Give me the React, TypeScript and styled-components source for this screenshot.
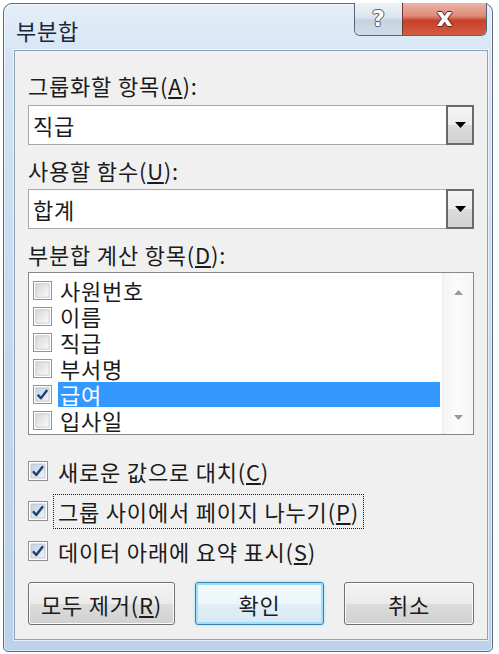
import React from 'react'
import styled, { createGlobalStyle, css } from 'styled-components'

const GlobalStyle = createGlobalStyle`
  html, body {
    margin: 0;
    padding: 0;
    background: #ffffff;
  }
  body {
    font-family: "Noto Sans CJK KR", "Noto Sans", sans-serif;
    color: #1b1b1b;
  }
`

// shared dialog text: Malgun Gothic runs wider than Noto, so add a little tracking
const uiText = css`
  font-size: 22px;
  letter-spacing: 0.8px;
`

const Page = styled.div`
  width: 499px;
  height: 654px;
  box-sizing: border-box;
  padding: 3px 6px 2px 3px;
`

const Window = styled.div`
  height: 100%;
  box-sizing: border-box;
  border: 1px solid #5d6c7e;
  border-radius: 9px 9px 5px 5px;
  background: linear-gradient(180deg, #e4eef9 0%, #d3e3f3 10%, #c4d8ed 55%, #bcd2ea 100%);
  box-shadow: inset 0 0 0 1px rgba(255, 255, 255, 0.55);
  display: flex;
  flex-direction: column;
  padding: 0 4px 11px 10px;
`

const TitleBar = styled.div`
  height: 46px;
  display: flex;
  justify-content: space-between;
  align-items: flex-start;
`

const Title = styled.div`
  ${uiText}
  margin: 13px 0 0 2px;
  line-height: 26px;
  color: #1c2733;
`

const CaptionGroup = styled.div`
  display: flex;
  margin: -1px 1px 0 0;
  height: 32px;
  border: 1px solid #56667a;
  border-top: none;
  border-radius: 0 0 6px 6px;
  overflow: hidden;
`

const CaptionButton = styled.div<{ $close?: boolean }>`
  width: ${(p) => (p.$close ? '84px' : '47px')};
  display: flex;
  align-items: center;
  justify-content: center;
  font-family: "DejaVu Sans", sans-serif;
  font-weight: bold;
  font-size: ${(p) => (p.$close ? '25px' : '22px')};
  line-height: 1;
  padding-bottom: ${(p) => (p.$close ? '4px' : '1px')};
  box-sizing: border-box;
  color: #ffffff;
  background: ${(p) =>
    p.$close
      ? 'linear-gradient(180deg, #ebb4a6 0%, #de8c7a 40%, #c8402a 55%, #d35c43 100%)'
      : 'linear-gradient(180deg, #eef3f8 0%, #dbe4ee 45%, #c6d3e1 55%, #cfdbe8 100%)'};
  border-left: ${(p) => (p.$close ? '1px solid #6b3a33' : 'none')};
  text-shadow: ${(p) =>
    p.$close
      ? '0 0 1px #5b1a10, 1px 0 0 #6b2318, -1px 0 0 #6b2318, 0 1px 0 #6b2318, 0 -1px 0 #6b2318'
      : '0 0 1px #3d4f66, 1px 0 0 #56677d, -1px 0 0 #56677d, 0 1px 0 #56677d, 0 -1px 0 #56677d'};
`

const Client = styled.div`
  flex: 1;
  box-sizing: border-box;
  background: #f0f0f0;
  border: 1px solid #8da1b7;
  box-shadow: 0 0 0 1px rgba(255, 255, 255, 0.6);
  padding: 0 13px;
  display: flex;
  flex-direction: column;
`

const FieldLabel = styled.div<{ $top: number }>`
  ${uiText}
  margin-top: ${(p) => p.$top}px;
  line-height: 26px;
  height: 26px;
`

const Key = styled.span`
  text-decoration: underline;
  text-underline-offset: 2px;
`

const Combo = styled.div<{ $top: number }>`
  margin-top: ${(p) => p.$top}px;
  height: 40px;
  box-sizing: border-box;
  border: 1px solid #a4a9b1;
  background: #ffffff;
  display: flex;
  align-items: stretch;
`

const ComboText = styled.div`
  ${uiText}
  flex: 1;
  padding-left: 4px;
  line-height: 38px;
`

const DropButton = styled.div`
  width: 28px;
  margin: -1px -1px -1px 0;
  box-sizing: border-box;
  border: 2px solid #6a6a6a;
  background: linear-gradient(180deg, #f4f4f4 0%, #ececec 50%, #dcdcdc 50%, #d2d2d2 100%);
  display: flex;
  align-items: center;
  justify-content: center;
`

const ListBox = styled.div`
  margin-top: 5px;
  height: 163px;
  box-sizing: border-box;
  border: 1px solid #828790;
  background: #ffffff;
  display: flex;
  overflow: hidden;
`

const ListItems = styled.div`
  flex: 1;
  padding: 4px 2px 0 4px;
`

const ListRow = styled.div`
  height: 26px;
  display: flex;
  align-items: center;
`

const ItemText = styled.div<{ $selected?: boolean }>`
  ${uiText}
  flex: 1;
  margin-left: 6px;
  height: 25px;
  padding-left: 2px;
  line-height: 25px;
  background: ${(p) => (p.$selected ? '#3399ff' : 'transparent')};
  color: ${(p) => (p.$selected ? '#ffffff' : '#1b1b1b')};
`

const ScrollBar = styled.div`
  width: 30px;
  border-left: 1px solid #ebebeb;
  background: linear-gradient(90deg, #f3f3f3 0%, #fbfbfb 40%, #f6f6f6 100%);
  display: flex;
  flex-direction: column;
  justify-content: space-between;
  padding: 14px 0 12px;
`

const ScrollArrow = styled.div`
  height: 10px;
  display: flex;
  align-items: center;
  justify-content: center;
`

const OptionRow = styled.div<{ $top?: number }>`
  margin-top: ${(p) => p.$top || 0}px;
  height: 40px;
  display: flex;
  align-items: center;
`

const OptionText = styled.div<{ $focused?: boolean }>`
  ${uiText}
  margin-left: 5px;
  padding: 0 4px;
  line-height: 33px;
  border: 1px ${(p) => (p.$focused ? 'dotted #1a1a1a' : 'solid transparent')};
`

const ButtonRow = styled.div`
  margin-top: 11px;
  display: flex;
  justify-content: space-between;
`

const PushButton = styled.div<{ $width: number; $default?: boolean }>`
  ${uiText}
  width: ${(p) => p.$width}px;
  height: 43px;
  box-sizing: border-box;
  border: 1px solid ${(p) => (p.$default ? '#3c7fb1' : '#707070')};
  border-radius: 3px;
  background: ${(p) =>
    p.$default
      ? 'linear-gradient(180deg, #f4fafe 0%, #eef6fb 50%, #e2eef7 50%, #d8e9f4 100%)'
      : 'linear-gradient(180deg, #f3f3f3 0%, #ebebeb 50%, #dddddd 50%, #d0d0d0 100%)'};
  box-shadow: ${(p) =>
    p.$default ? 'inset 0 0 0 2px #9fe0f8, 0 0 3px #8fdcfa' : 'inset 0 0 0 1px #fbfbfb'};
  display: flex;
  align-items: center;
  justify-content: center;
  color: #1b1b1b;
`

function CheckBox({ checked, size }: { checked?: boolean; size: number }) {
  const id = `cb${checked ? 1 : 0}`
  return (
    <svg width={size} height={size} viewBox="0 0 20 20" style={{ flex: 'none' }}>
      <defs>
        <linearGradient id={id} x1="0" y1="0" x2="1" y2="1">
          <stop offset="0" stopColor={checked ? '#c5d2e2' : '#d6d6d6'} />
          <stop offset="1" stopColor={checked ? '#edf2f8' : '#fbfbfb'} />
        </linearGradient>
      </defs>
      <rect x="0.5" y="0.5" width="19" height="19" fill="#ffffff" stroke="#8e8f8f" />
      <rect x="3" y="3" width="14" height="14" fill={`url(#${id})`} stroke="#b9bfc7" strokeWidth="0.8" />
      {checked && (
        <path d="M5 10.2 L8.3 14 L15 5.2" fill="none" stroke="#1f3f70" strokeWidth="2.4" strokeLinejoin="round" />
      )}
    </svg>
  )
}

function DropArrow() {
  return (
    <svg width="11" height="6" viewBox="0 0 11 6">
      <path d="M0 0 H11 L5.5 6 Z" fill="#000" />
    </svg>
  )
}

const listItems = ['사원번호', '이름', '직급', '부서명', '급여', '입사일']

export default function App() {
  return (
    <Page>
      <GlobalStyle />
      <Window>
        <TitleBar>
          <Title>부분합</Title>
          <CaptionGroup>
            <CaptionButton>?</CaptionButton>
            <CaptionButton $close>x</CaptionButton>
          </CaptionGroup>
        </TitleBar>
        <Client>
          <FieldLabel $top={21}>
            그룹화할 항목(<Key>A</Key>):
          </FieldLabel>
          <Combo $top={7}>
            <ComboText>직급</ComboText>
            <DropButton>
              <DropArrow />
            </DropButton>
          </Combo>
          <FieldLabel $top={12}>
            사용할 함수(<Key>U</Key>):
          </FieldLabel>
          <Combo $top={6}>
            <ComboText>합계</ComboText>
            <DropButton>
              <DropArrow />
            </DropButton>
          </Combo>
          <FieldLabel $top={12}>
            부분합 계산 항목(<Key>D</Key>):
          </FieldLabel>
          <ListBox>
            <ListItems>
              {listItems.map((item) => (
                <ListRow key={item}>
                  <CheckBox size={19} checked={item === '급여'} />
                  <ItemText $selected={item === '급여'}>{item}</ItemText>
                </ListRow>
              ))}
            </ListItems>
            <ScrollBar>
              <ScrollArrow>
                <svg width="9" height="5" viewBox="0 0 9 5">
                  <path d="M0 5 L4.5 0 L9 5 Z" fill="#9a9a9a" />
                </svg>
              </ScrollArrow>
              <ScrollArrow>
                <svg width="9" height="5" viewBox="0 0 9 5">
                  <path d="M0 0 L9 0 L4.5 5 Z" fill="#9a9a9a" />
                </svg>
              </ScrollArrow>
            </ScrollBar>
          </ListBox>
          <OptionRow $top={16}>
            <CheckBox size={20} checked />
            <OptionText>
              새로운 값으로 대치(<Key>C</Key>)
            </OptionText>
          </OptionRow>
          <OptionRow>
            <CheckBox size={20} checked />
            <OptionText $focused>
              그룹 사이에서 페이지 나누기(<Key>P</Key>)
            </OptionText>
          </OptionRow>
          <OptionRow>
            <CheckBox size={20} checked />
            <OptionText>
              데이터 아래에 요약 표시(<Key>S</Key>)
            </OptionText>
          </OptionRow>
          <ButtonRow>
            <PushButton $width={147}>
              모두 제거(<Key>R</Key>)
            </PushButton>
            <PushButton $width={129} $default>
              확인
            </PushButton>
            <PushButton $width={130}>취소</PushButton>
          </ButtonRow>
        </Client>
      </Window>
    </Page>
  )
}
